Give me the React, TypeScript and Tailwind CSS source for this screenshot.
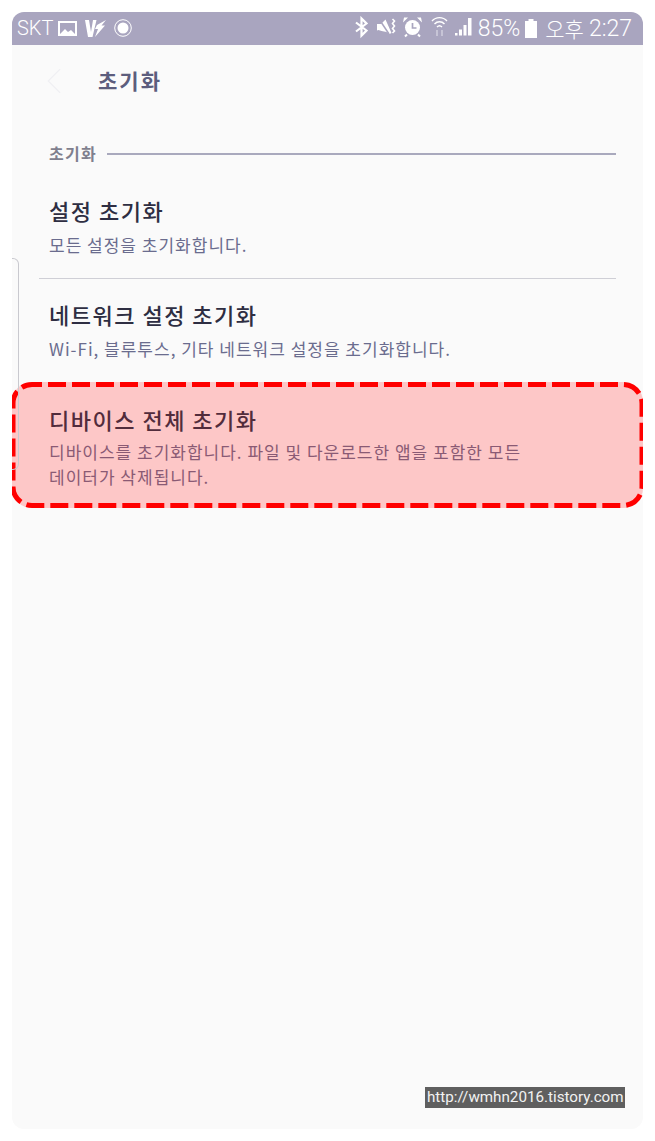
import { ChevronLeft } from 'lucide-react';

const sans = "font-['Noto_Sans_CJK_KR','Noto_Sans',sans-serif]";

function StatusIcons() {
  return (
    <svg width="141" height="24" viewBox="0 0 141 24" fill="none" className="block">
      {/* bluetooth */}
      <path d="M24 6.500l10.500 8-5 5V2.500l5 5-10.500 8" stroke="#fff" strokeWidth="2.200" />
      {/* vibrate / mute */}
      <path d="M45 8h4l4.500-4.500 6 13.500-2 1-3-2-5-1-3-1-1.500.5z" fill="#fff" />
      <path d="M47 3l10 15" stroke="#a9a5bf" strokeWidth="1.500" />
      <path d="M60.500 3l2 2-2 2.500 2 2.500-2 2.500 2 2.500-2 2" stroke="#fff" strokeWidth="1.600" />
      {/* alarm */}
      <circle cx="80.500" cy="11.500" r="7.500" fill="#fff" />
      <path d="M80.500 7v5h4" stroke="#a9a5bf" strokeWidth="1.700" />
      <path d="M71 6.500l5-5h-4zM90 6.500l-5-5h4z" fill="#fff" />
      <path d="M75 18.500l-2 2M86 18.500l2 2" stroke="#fff" strokeWidth="2" />
      {/* wifi */}
      <path d="M100 5c4-4.500 11-4.500 15 0M102.500 8c2.800-3 7.200-3 10 0M105 11c1.500-1.500 3.500-1.500 5 0" stroke="#fff" strokeWidth="1.400" />
      <path d="M105 14v6M110 14v6" stroke="#cfccdc" strokeWidth="1.600" />
      {/* signal */}
      <path d="M123 17h2.500v2.500H123zM127 13.500h3v6h-3zM131.500 9h3v10.500h-3zM136 2h3.500v17.500H136z" fill="#fff" />
    </svg>
  );
}

function Row({ title, desc }: { title: string; desc: string }) {
  return (
    <div>
      <div className="text-[22px] leading-[28px] font-medium tracking-[1.5px] text-[#2e2e42]">{title}</div>
      <div className="mt-[8px] text-[17px] leading-[26px] tracking-[1px] text-[#6a6c8e]">{desc}</div>
    </div>
  );
}

export default function App() {
  return (
    <div className={`w-[655px] h-[1141px] bg-white p-3 ${sans}`}>
      <div className="relative w-[631px] h-[1117px] bg-[#fafafa] rounded-[12px] overflow-hidden">
        <div className="h-[33px] bg-[#a9a5bf] flex items-center justify-between pl-[5px] pr-[11px] pb-[1px] text-white">
          <div className="flex items-center">
            <span className="text-[20px] leading-none font-['Roboto',sans-serif] font-light">SKT</span>
            <svg width="19" height="17" viewBox="0 0 19 17" className="block ml-[5px]">
              <path d="M1 2h17v13H1z" fill="none" stroke="#fff" strokeWidth="2" />
              <path d="M2 14l5-5 3 3 3-2 4 4z" fill="#fff" />
            </svg>
            <svg width="21" height="19" viewBox="0 0 21 19" className="block ml-[8px]">
              <path d="M0 1h4l2 12L8 1h3.500L7.500 18H3zM12 6l9-5-4.500 5.500H20L10 18l3-8h-3z" fill="#fff" />
            </svg>
            <svg width="18" height="18" viewBox="0 0 18 18" className="block ml-[8px]">
              <circle cx="9" cy="9" r="8.300" fill="none" stroke="#fff" strokeWidth="1" />
              <circle cx="9" cy="9" r="5.500" fill="#fff" />
            </svg>
          </div>
          <div className="flex items-center gap-[5px]">
            <StatusIcons />
            <span className="text-[23px] leading-none font-['Roboto',sans-serif] font-light">85%</span>
            <svg width="12" height="19" viewBox="0 0 12 19" className="block">
              <path d="M3.500 0h5v2H12v17H0V2h3.500z" fill="#fff" />
            </svg>
            <span className="text-[21px] leading-none font-light ml-[3px]">오후</span>
            <span className="text-[23px] leading-none font-['Roboto',sans-serif] font-light">2:27</span>
          </div>
        </div>

        <div className="h-[72px] flex items-center pl-[19px] pb-[1px]">
          <ChevronLeft size={46} strokeWidth={0.6} className="text-[#f0f0f3]" />
          <span className="ml-[21px] text-[21px] font-bold tracking-[2px] text-[#5c5d7d]">초기화</span>
        </div>

        <div className="pl-[37px] pr-[27px] flex items-center gap-[10px] h-[22px] mt-[26px]">
          <span className="text-[16px] leading-[20px] mb-[2px] font-bold tracking-[1.3px] text-[#7f7f8e]">초기화</span>
          <div className="flex-1 h-[2px] bg-[#a9a9bd]" />
        </div>

        <div className="pl-[37px] pr-[27px] pt-[31px]">
          <Row title="설정 초기화" desc="모든 설정을 초기화합니다." />
        </div>
        <div className="ml-[27px] mr-[27px] mt-[20px] h-px bg-[#cfcfd6]" />
        <div className="pl-[37px] pr-[27px] pt-[21px]">
          <Row title="네트워크 설정 초기화" desc="Wi-Fi, 블루투스, 기타 네트워크 설정을 초기화합니다." />
        </div>

        <div className="relative mt-[20px] h-[126px] bg-[#fdc7c7] rounded-[20px] pl-[37px] pt-[23px]">
          <div className="text-[22px] leading-[28px] font-medium tracking-[1.5px] text-[#522c3c]">디바이스 전체 초기화</div>
          <div className="mt-[6px] text-[17px] leading-[25px] tracking-[1px] text-[#8a5a74]">
            디바이스를 초기화합니다. 파일 및 다운로드한 앱을 포함한 모든
            <br />
            데이터가 삭제됩니다.
          </div>
          <svg width="631" height="126" viewBox="0 0 631 126" fill="none" className="absolute left-0 top-0">
            <rect x="1" y="2.500" width="629" height="121" rx="19" stroke="#ff0000" strokeWidth="5" strokeDasharray="18 6" strokeDashoffset="8" />
          </svg>
        </div>

        <div className="absolute left-0 top-[246px] w-[7px] h-[212px] rounded-r-[6px] border-r border-y border-[#c9c9cf]" />

        <div className="absolute left-[413px] top-[1075px] w-[200px] h-[21px] bg-[#5f5f5f] pl-[2px] text-[#f2f2f2] text-[15.2px] leading-[21px] font-normal font-['Roboto',sans-serif]">
          http://wmhn2016.tistory.com
        </div>
      </div>
    </div>
  );
}
